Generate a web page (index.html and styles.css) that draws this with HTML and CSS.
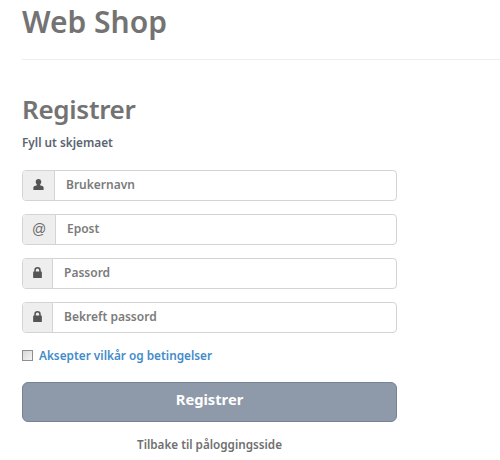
FILE: index.html
```html
<!DOCTYPE html>
<html lang="no">
<head>
<meta charset="utf-8">
<title>Web Shop</title>
<link rel="stylesheet" href="styles.css">
</head>
<body>
<div class="page">
  <header class="top"><h1>Web Shop</h1></header>
  <main class="form">
    <h2>Registrer</h2>
    <p class="lead">Fyll ut skjemaet</p>
    <div class="group">
      <span class="addon a54"><svg class="ic" viewBox="0 0 14 14"><path d="M7 1c1.900 0 3 1.300 3 3.100 0 1.200-.5 2.200-1.200 2.800v.8c1.800.5 3.700 1.200 3.700 2.300V13h-11v-3c0-1.100 1.900-1.800 3.700-2.300v-.8C4.500 6.300 4 5.300 4 4.100 4 2.300 5.100 1 7 1z"/></svg></span>
      <span class="field">Brukernavn</span>
    </div>
    <div class="group">
      <span class="addon a55"><span class="at">@</span></span>
      <span class="field">Epost</span>
    </div>
    <div class="group">
      <span class="addon a52"><svg class="ic" viewBox="0 0 14 14"><path fill-rule="evenodd" d="M3.500 6V4.500a3.500 3.500 0 0 1 7 0V6h.5c.4 0 .7.300.7.700v5.600c0 .4-.3.700-.7.700H3c-.4 0-.7-.3-.7-.7V6.700c0-.4.300-.7.700-.7zM5.200 6h3.600V4.500a1.800 1.800 0 0 0-3.600 0z"/></svg></span>
      <span class="field">Passord</span>
    </div>
    <div class="group last">
      <span class="addon a52"><svg class="ic" viewBox="0 0 14 14"><path fill-rule="evenodd" d="M3.500 6V4.500a3.500 3.500 0 0 1 7 0V6h.5c.4 0 .7.300.7.700v5.600c0 .4-.3.700-.7.700H3c-.4 0-.7-.3-.7-.7V6.700c0-.4.300-.7.700-.7zM5.200 6h3.600V4.500a1.800 1.800 0 0 0-3.600 0z"/></svg></span>
      <span class="field">Bekreft passord</span>
    </div>
    <label class="terms"><input type="checkbox" class="box"><span>Aksepter vilkår og betingelser</span></label>
    <button class="submit" type="button">Registrer</button>
    <p class="back">Tilbake til påloggingsside</p>
  </main>
</div>
</body>
</html>
```
FILE: styles.css
```css
html, body { margin: 0; padding: 0; background: #fff; }
body { font-family: "Noto Sans", "Open Sans", sans-serif; color: #737373; width: 500px; height: 460px; overflow: hidden; }
.page { padding-left: 22px; }
.top { height: 59px; border-bottom: 1px solid #eeeeee; }
h1 { margin: 0; padding-top: 3px; font-size: 30px; line-height: 38px; font-weight: 600; color: #737373; }
.form { width: 375px; }
h2 { margin: 31px 0 0; font-size: 26px; letter-spacing: -0.3px; line-height: 36px; font-weight: 600; color: #737373; }
.lead { margin: 7px 0 0; font-size: 11.800px; line-height: 16px; font-weight: 600; color: #5b6472; }
.group { display: flex; height: 31px; margin-bottom: 13px; box-sizing: border-box; border: 1px solid #d4d4d4; border-radius: 4px; overflow: hidden; }
.group.last { margin-bottom: 12px; }
.lead + .group { margin-top: 20px; }
.addon { flex: none; display: flex; align-items: center; justify-content: center; background: #eeeeee; border-right: 1px solid #d4d4d4; box-sizing: border-box; height: 100%; }
.a54 { width: 32px; }
.a55 { width: 33px; }
.a52 { width: 30px; }
.ic { width: 13px; height: 13px; fill: #555555; margin-bottom: 2px; }
.at { font-family: "Liberation Sans", sans-serif; font-size: 14px; color: #6a6a6a; margin-bottom: 2px; }
.field { flex: 1; display: flex; align-items: center; padding: 0 0 2px 11px; font-size: 12px; font-weight: 600; color: #7b7b7b; }
.terms { display: flex; align-items: center; height: 20px; font-size: 11.800px; font-weight: 600; color: #428bca; }
.box { appearance: none; width: 11px; height: 11px; margin: 0 6px 0 0; box-sizing: border-box; border: 1px solid #8f8f8f; background: linear-gradient(135deg, #d8d8d8, #f4f4f4); }
.submit { display: block; width: 375px; height: 40px; margin-top: 17px; padding: 0 0 6px; border: 1px solid #75829a; border-radius: 6px; background: #8e9aaa; color: #fff; font-family: inherit; font-size: 14.700px; font-weight: 700; }
.back { margin: 14px 0 0; text-align: center; font-size: 11.700px; line-height: 16px; font-weight: 600; color: #6f6f6f; }
```
